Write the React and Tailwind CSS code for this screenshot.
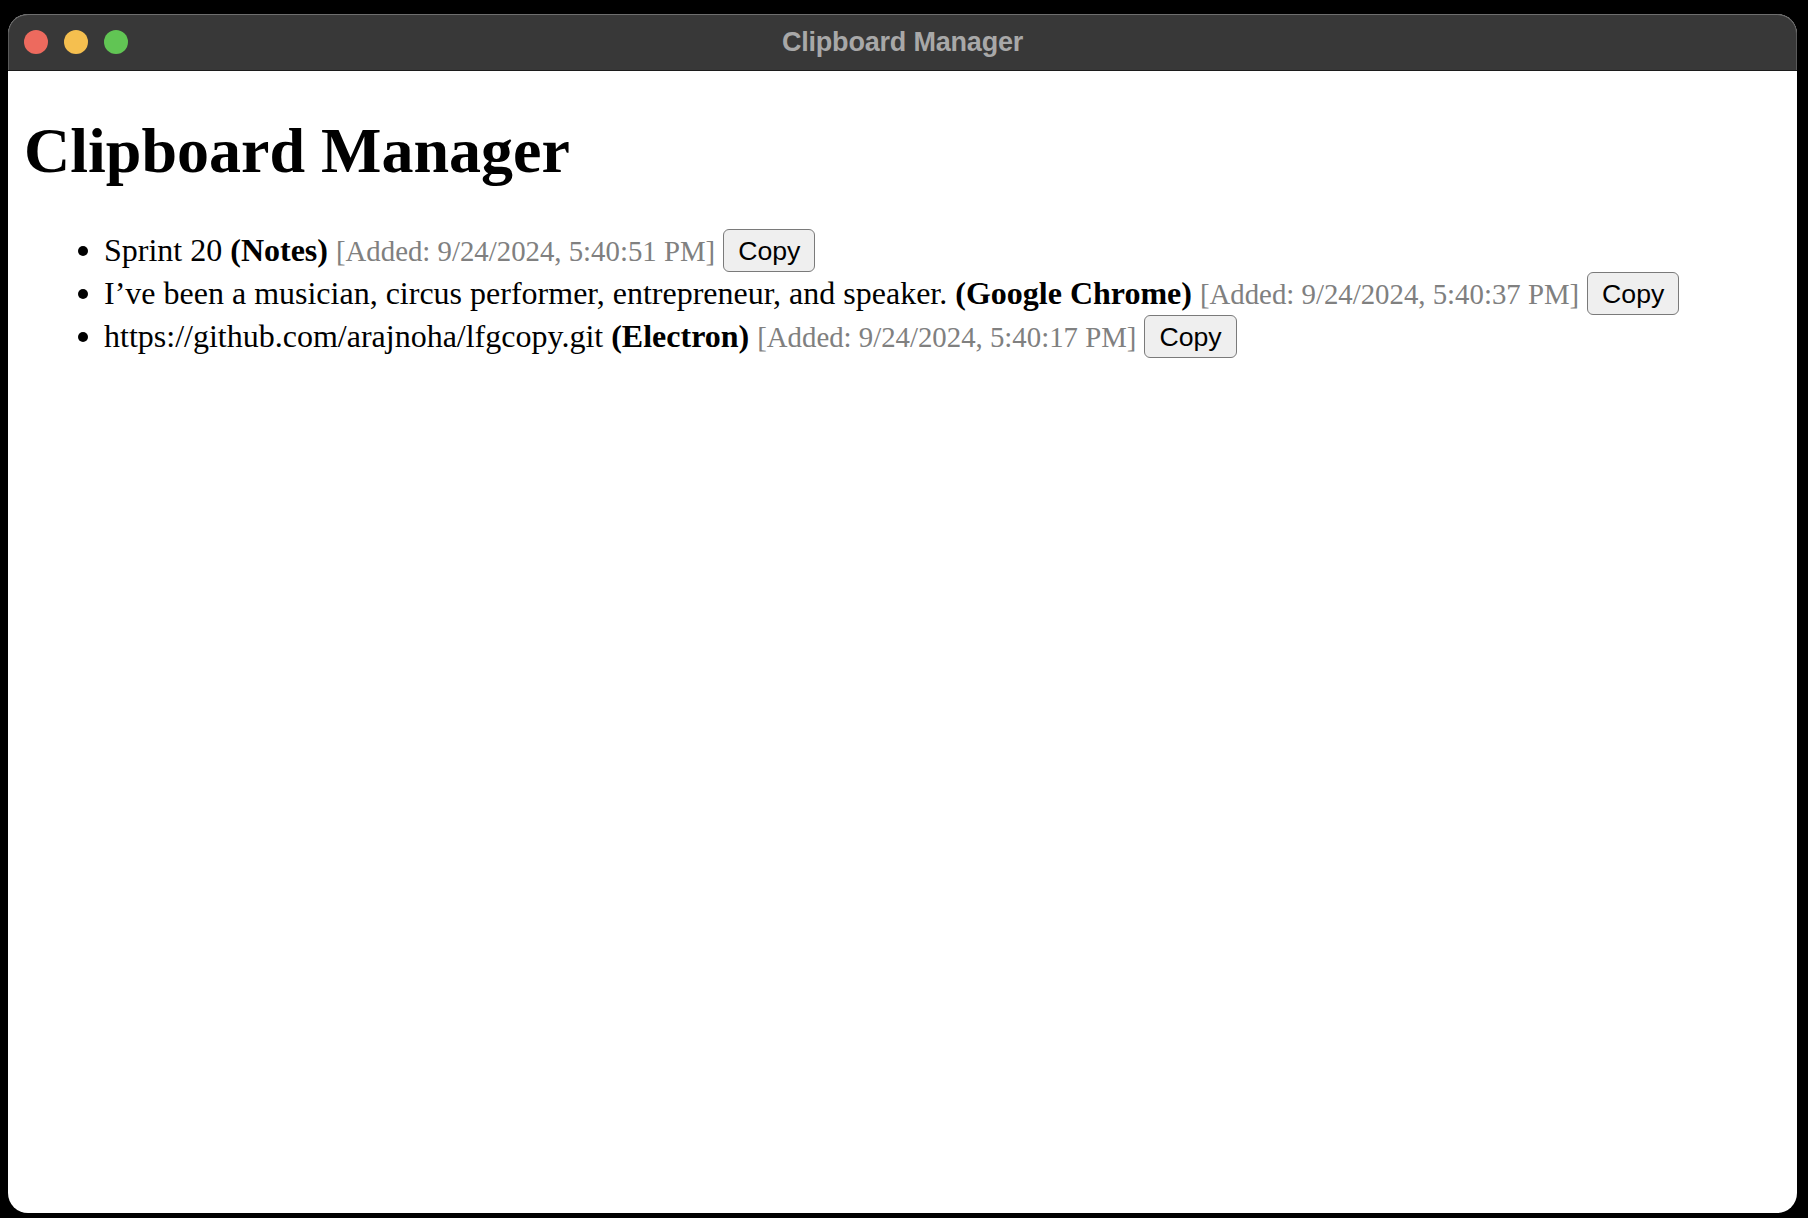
export default function App() {
  const items = [
    { text: "Sprint 20", app: "Notes", added: "9/24/2024, 5:40:51 PM" },
    {
      text: "I\u2019ve been a musician, circus performer, entrepreneur, and speaker.",
      app: "Google Chrome",
      added: "9/24/2024, 5:40:37 PM",
    },
    { text: "https://github.com/arajnoha/lfgcopy.git", app: "Electron", added: "9/24/2024, 5:40:17 PM" },
  ];
  return (
    <div className="min-h-screen w-full bg-black pt-[14px] pl-[8px]">
      <div className="w-[1789px] h-[1199px] rounded-[20px] overflow-hidden flex flex-col bg-white">
        <div className="h-[57px] shrink-0 bg-[#383838] border-b border-[#1c1c1c] rounded-t-[20px] shadow-[inset_0_1px_0_#6e6e6e,inset_1px_0_0_#5a5a5a,inset_-1px_0_0_#5a5a5a] grid grid-cols-[1fr_auto_1fr] items-center">
          <div className="flex items-center gap-[16px] pl-[16px]">
            <span className="block w-[24px] h-[24px] rounded-full bg-[#ed6a5e]" />
            <span className="block w-[24px] h-[24px] rounded-full bg-[#f5bf4f]" />
            <span className="block w-[24px] h-[24px] rounded-full bg-[#61c554]" />
          </div>
          <div className="text-[27px] font-bold text-[#a8a8a8] font-['Liberation_Sans',Arial,sans-serif] tracking-[-0.2px] leading-none">
            Clipboard Manager
          </div>
          <div />
        </div>
        <div className="flex-1 px-[16px] font-['Liberation_Serif','Times_New_Roman',serif] text-black">
          <h1 className="text-[64px] font-bold mt-[43px] mb-[41px] leading-[1.15]">Clipboard Manager</h1>
          <ul className="list-disc pl-[80px] text-[32px] leading-[1.15]">
            {items.map((it, i) => (
              <li key={i}>
                {it.text} <strong className="font-bold">({it.app})</strong>{" "}
                <span className="text-[#808080] text-[28.8px]">[Added: {it.added}]</span>{" "}
                <button className="inline-block align-baseline h-[43px] pt-[3px] pb-0 px-[14px] bg-[#efefef] border border-[#7a7a7a] rounded-[6px] font-['Liberation_Sans',Arial,sans-serif] text-[26.67px] leading-[1.15] text-black">
                  Copy
                </button>
              </li>
            ))}
          </ul>
        </div>
      </div>
    </div>
  );
}
